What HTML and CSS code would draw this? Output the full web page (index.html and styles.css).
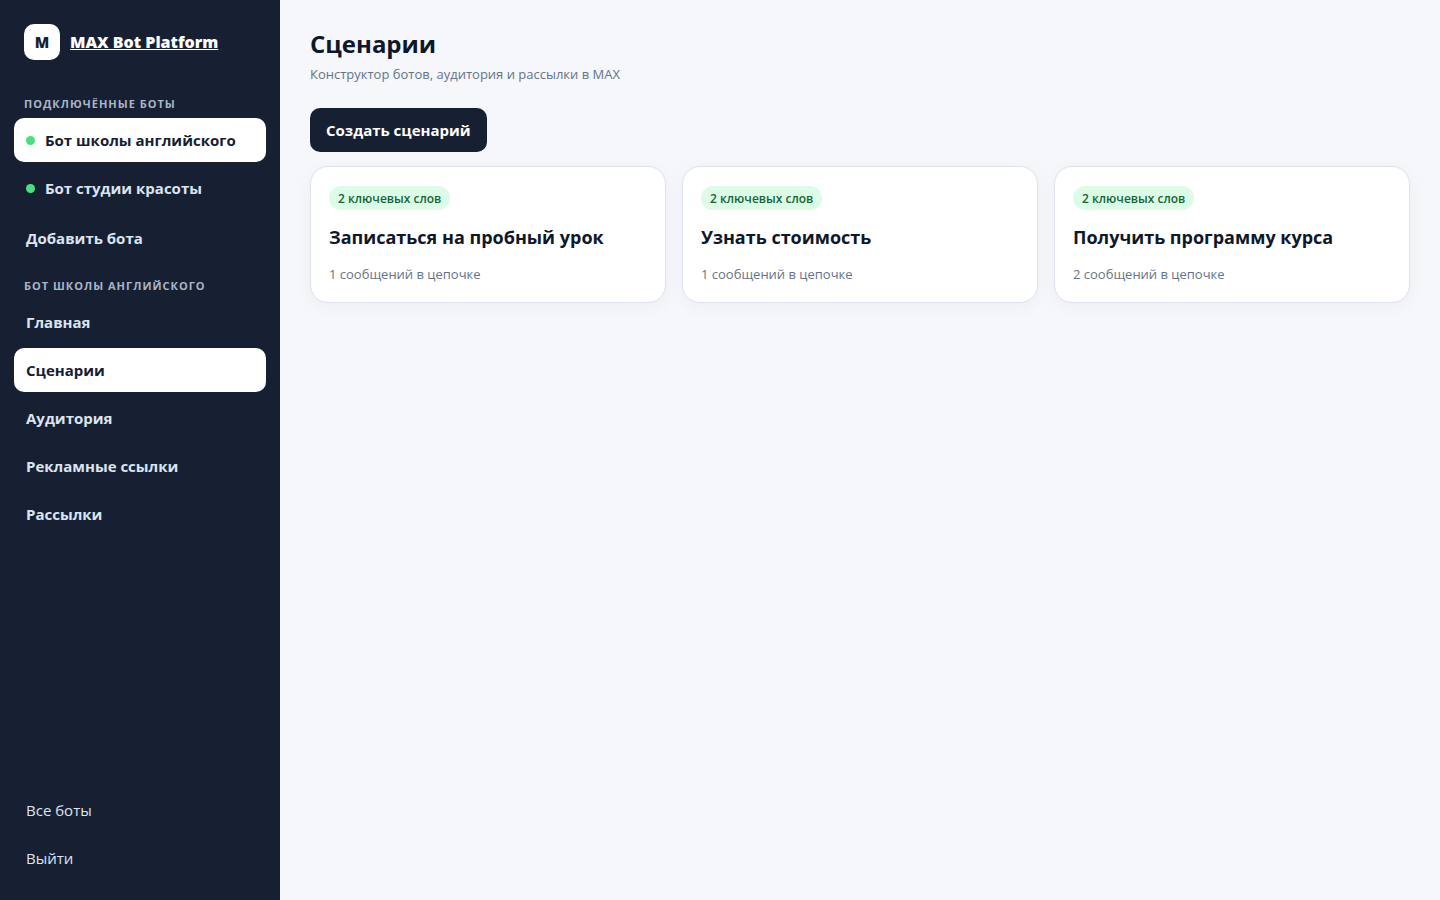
FILE: index.html
```html
<!DOCTYPE html>
<html lang="ru">
<head>
  <meta charset="UTF-8" />
  <meta name="viewport" content="width=device-width, initial-scale=1.0"/>
  <title>Сценарии</title>
  <link rel="stylesheet" href="styles.css">
</head>
<body>
<div class="layout">
  <aside class="sidebar">
    <div class="brand">
      <div class="logo">M</div>
      <a class="brand-name" href="#">MAX Bot Platform</a>
    </div>

    <div class="nav-title">Подключённые боты</div>
    <nav class="nav">
      <a class="nav-link active" href="#"><span class="dot"></span>Бот школы английского</a>
      <a class="nav-link" href="#"><span class="dot"></span>Бот студии красоты</a>
    </nav>
    <a class="nav-link add-bot" href="#">Добавить бота</a>

    <div class="nav-title">Бот школы английского</div>
    <nav class="nav">
      <a class="nav-link" href="#">Главная</a>
      <a class="nav-link active" href="#">Сценарии</a>
      <a class="nav-link" href="#">Аудитория</a>
      <a class="nav-link" href="#">Рекламные ссылки</a>
      <a class="nav-link" href="#">Рассылки</a>
    </nav>

    <div class="nav sidebar-footer">
      <a class="nav-link" href="#">Все боты</a>
      <a class="nav-link" href="#">Выйти</a>
    </div>
  </aside>

  <main class="main">
    <header class="page-head">
      <h1>Сценарии</h1>
      <p class="muted">Конструктор ботов, аудитория и рассылки в MAX</p>
    </header>

    <button class="btn" type="button">Создать сценарий</button>

    <div class="cards">
      <article class="card">
        <span class="badge">2 ключевых слов</span>
        <h2>Записаться на пробный урок</h2>
        <p class="muted">1 сообщений в цепочке</p>
      </article>
      <article class="card">
        <span class="badge">2 ключевых слов</span>
        <h2>Узнать стоимость</h2>
        <p class="muted">1 сообщений в цепочке</p>
      </article>
      <article class="card">
        <span class="badge">2 ключевых слов</span>
        <h2>Получить программу курса</h2>
        <p class="muted">2 сообщений в цепочке</p>
      </article>
    </div>
  </main>
</div>
</body>
</html>
```

FILE: styles.css
```css
* {
  box-sizing: border-box;
}

body {
  margin: 0;
  background: #f5f7fb;
  color: #0f172a;
  font-family: "Segoe UI", "Open Sans", "Noto Sans", sans-serif;
  font-size: 15px;
  line-height: 20px;
}

h1, h2, p {
  margin: 0;
}

.layout {
  display: grid;
  grid-template-columns: 280px 1fr;
  min-height: 100vh;
}

/* sidebar */
.sidebar {
  display: flex;
  flex-direction: column;
  padding: 24px 14px 20px;
  background: #172033;
}

.brand {
  display: flex;
  align-items: center;
  gap: 10px;
  padding: 0 10px;
  margin-bottom: 35px;
}

.logo {
  display: grid;
  place-items: center;
  width: 36px;
  height: 36px;
  border-radius: 10px;
  background: #fff;
  color: #172033;
  font-weight: 800;
}

.brand-name {
  color: #fff;
  font-size: 16px;
  font-weight: 800;
}

.nav-title {
  padding: 0 10px;
  margin-bottom: 5px;
  color: #a9b5c9;
  font-size: 11px;
  line-height: 18px;
  font-weight: 700;
  letter-spacing: 1px;
  text-transform: uppercase;
}

.nav {
  display: flex;
  flex-direction: column;
  gap: 4px;
}

.nav-link {
  display: flex;
  align-items: center;
  gap: 10px;
  min-height: 44px;
  padding: 0 12px;
  border-radius: 10px;
  color: #dbe4f0;
  font-weight: 700;
  text-decoration: none;
}

.nav-link.active {
  background: #fff;
  color: #172033;
}

.add-bot {
  margin: 6px 0 17px;
}

.dot {
  width: 9px;
  height: 9px;
  border-radius: 50%;
  background: #4ade80;
}

.sidebar-footer {
  margin-top: auto;
}

.sidebar-footer .nav-link {
  font-weight: 400;
}

/* content */
.main {
  padding: 30px;
}

.page-head {
  margin-bottom: 24px;
}

h1 {
  font-size: 24px;
  line-height: 28px;
  margin-bottom: 6px;
}

.muted {
  color: #64748b;
  font-size: 13px;
}

.btn {
  min-height: 44px;
  padding: 0 16px;
  border: 0;
  border-radius: 10px;
  background: #172033;
  color: #fff;
  font: inherit;
  font-weight: 700;
  cursor: pointer;
}

.cards {
  display: grid;
  grid-template-columns: repeat(3, 1fr);
  gap: 16px;
  margin-top: 14px;
}

.card {
  padding: 19px 18px 18px;
  border: 1px solid #dce3ef;
  border-radius: 18px;
  background: #fff;
  box-shadow: 0 4px 18px rgba(15, 23, 42, 0.04);
}

.badge {
  display: inline-block;
  padding: 4px 9px 2px;
  border-radius: 999px;
  background: #dcfce7;
  color: #166534;
  font-size: 12px;
  line-height: 18px;
  font-weight: 600;
  vertical-align: top;
}

.card h2 {
  margin: 15px 0;
  font-size: 18px;
  line-height: 24px;
}
```
